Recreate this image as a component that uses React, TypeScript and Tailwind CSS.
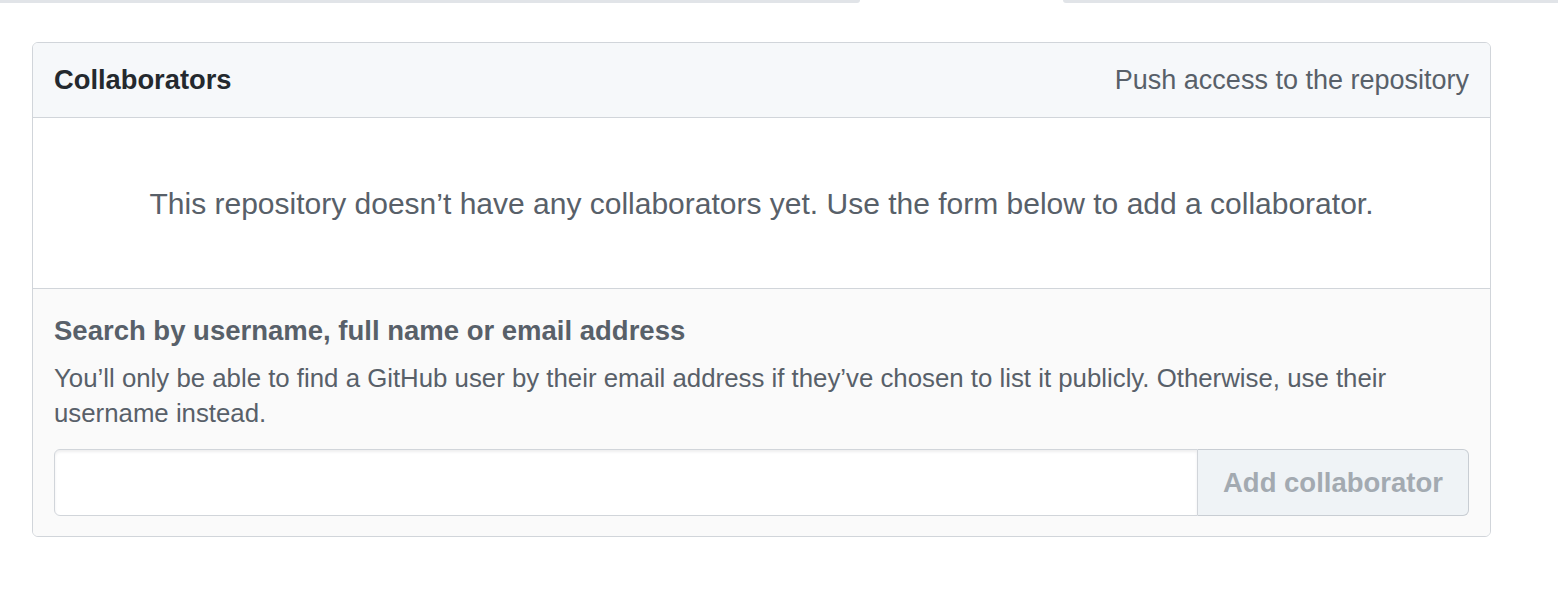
export default function App() {
  return (
    <div className="w-[1558px] h-[604px] bg-white font-['Liberation_Sans',Arial,sans-serif]">
      {/* tab underline */}
      <div className="flex h-[3px]">
        <div className="w-[860px] h-[3px] bg-[#e1e4e8] rounded-br-[3px]" />
        <div className="w-[203px]" />
        <div className="flex-1 h-[3px] bg-[#e1e4e8] rounded-bl-[3px]" />
      </div>

      <div className="ml-[32px] mt-[39px] w-[1459px] border border-[#d1d5da] rounded-[6px] overflow-hidden">
        <div className="h-[75px] flex items-center justify-between px-[21px] bg-[#f6f8fa] border-b border-[#d1d5da]">
          <h3 className="text-[27.3px] font-bold text-[#24292e]">Collaborators</h3>
          <span className="text-[27px] text-[#586069]">Push access to the repository</span>
        </div>

        <div className="h-[171px] flex items-center justify-center border-b border-[#d1d5da]">
          <p className="text-[30px] text-[#586069]">
            This repository doesn’t have any collaborators yet. Use the form below to add a collaborator.
          </p>
        </div>

        <div className="bg-[#fafafa] px-[21px] pt-[24px] pb-[20px]">
          <h4 className="text-[27.5px] font-bold text-[#586069] leading-[36px]">
            Search by username, full name or email address
          </h4>
          <p className="mt-[12px] text-[25.8px] leading-[35px] text-[#586069] pr-[60px]">
            You’ll only be able to find a GitHub user by their email address if they’ve chosen to list it publicly. Otherwise, use their username instead.
          </p>
          <div className="mt-[18px] flex h-[67px]">
            <input
              type="text"
              className="flex-1 h-full bg-white border border-[#d1d5da] rounded-l-[6px] shadow-[inset_0_2px_3px_rgba(27,31,35,0.075)] px-4 outline-none"
            />
            <button
              disabled
              className="w-[271px] h-full bg-[#eff3f6] border border-l-0 border-[#c8cdd3] rounded-r-[6px] text-[27.5px] font-bold text-[#a3aab1]"
            >
              Add collaborator
            </button>
          </div>
        </div>
      </div>
    </div>
  );
}
